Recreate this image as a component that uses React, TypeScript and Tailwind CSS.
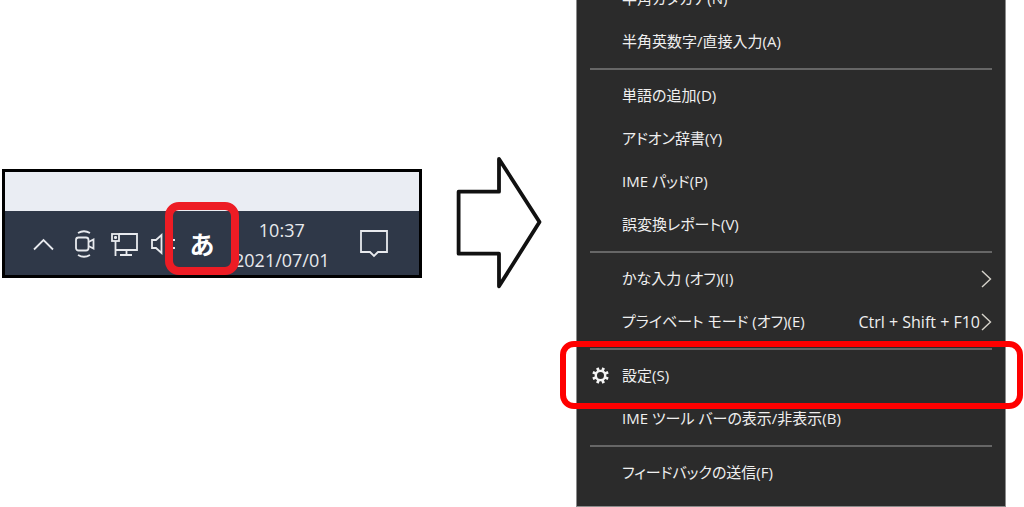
import React from "react";

type Item = {
  label: string;
  shortcut?: string;
  submenu?: boolean;
  settings?: boolean;
};

const groups: Item[][] = [
  [{ label: "半角カタカナ(N)" }, { label: "半角英数字/直接入力(A)" }],
  [
    { label: "単語の追加(D)" },
    { label: "アドオン辞書(Y)" },
    { label: "IME パッド(P)" },
    { label: "誤変換レポート(V)" },
  ],
  [
    { label: "かな入力 (オフ)(I)", submenu: true },
    { label: "プライベート モード (オフ)(E)", shortcut: "Ctrl + Shift + F10", submenu: true },
  ],
  [{ label: "設定(S)", settings: true }, { label: "IME ツール バーの表示/非表示(B)" }],
  [{ label: "フィードバックの送信(F)" }],
];

const GearIcon = () => (
  <svg className="w-[17px] h-[17px]" viewBox="0 0 16 16" fill="none" stroke="#f4f4f4">
    <circle cx="8" cy="8" r="4.4" strokeWidth="2.2" />
    <path
      strokeWidth="2.6"
      d="M12.4 9.8l2.8 1.2M9.8 12.4l1.2 2.8M6.2 12.4L5 15.2M3.6 9.8L.8 11M3.6 6.2L.8 5M6.2 3.6L5 .8M9.8 3.6L11 .8M12.4 6.2L15.2 5"
    />
  </svg>
);

const MenuItem = ({ label, shortcut, submenu, settings }: Item) => (
  <li className="relative">
    <button className="flex items-center w-full h-[43px] pl-[15px] pr-[13px] text-left whitespace-nowrap">
      <span className="w-[30px] shrink-0">{settings && <GearIcon />}</span>
      <span className="grow">{label}</span>
      {shortcut && <span className="text-base">{shortcut}</span>}
      {submenu && (
        <svg className="w-3 h-5 shrink-0" viewBox="0 0 12 20" fill="none" stroke="#d6d3cb" strokeWidth="1.4">
          <path d="M2 2l8.500 8L2 18" />
        </svg>
      )}
    </button>
    {settings && (
      <div className="absolute z-10 -top-[13px] -bottom-[12px] -left-[17px] -right-[18px] border-6 border-[#ff0000] rounded-[14px] pointer-events-none"></div>
    )}
  </li>
);

const ImeMenu = () => (
  <nav className="min-w-0 -mt-6 pb-3 bg-[#2b2b2b] border border-[#8c8c8c] text-[#efefef] text-[15px]">
    {groups.map((items, i) => (
      <React.Fragment key={i}>
        {i > 0 && (
          <div className="h-[11px] px-[13px] flex items-center">
            <hr className="grow border-0 h-[2px] bg-[#666666]" />
          </div>
        )}
        <ul>
          {items.map((item) => (
            <MenuItem key={item.label} {...item} />
          ))}
        </ul>
      </React.Fragment>
    ))}
  </nav>
);

const Taskbar = () => (
  <section className="min-w-0 mt-[169px] border-3 border-black bg-[#eaedf3]">
    <div className="h-[39px]"></div>
    <div className="flex items-center h-16 pt-[2px] pl-7 bg-[#2f3848] text-[#e8eaee]">
      <button aria-label="隠れているインジケーター" className="shrink-0 mr-[21px]">
        <svg className="block w-[21px] h-7" viewBox="0 0 21 28" fill="none" stroke="currentColor" strokeWidth="1.800">
          <path d="M1 19.500L10.500 10 20 19.500" />
        </svg>
      </button>
      <button aria-label="会議" className="shrink-0 mr-4">
        <svg className="block w-5 h-7" viewBox="0 0 20 28" fill="none" stroke="currentColor" strokeWidth="1.800">
          <rect x="1" y="7.500" width="12.500" height="13" rx="2.500" />
          <path d="M13.500 12l5-2.500v9l-5-2.500M3 3Q9 -.5 15 3M3 25Q9 28.500 15 25" />
        </svg>
      </button>
      <button aria-label="ネットワーク" className="shrink-0 mr-[13px]">
        <svg className="block w-[27px] h-7" viewBox="0 0 27 28" fill="none" stroke="currentColor" strokeWidth="1.800">
          <path d="M8 4h18v16H5M15.500 20v4.500M9 25h12M4.500 11v15" />
          <rect x="1" y="4" width="7" height="7" />
          <path d="M3 7.500h3M4.500 6v3" />
        </svg>
      </button>
      <button aria-label="音量" className="shrink-0 -mr-[11px]">
        <svg className="block w-[25px] h-7" viewBox="0 0 25 28" fill="none" stroke="currentColor" strokeWidth="1.800">
          <path d="M1 10h4l5.500-5v18L5 18H1zM22 10h2M22 18h2" />
        </svg>
      </button>
      <button className="relative z-10 shrink-0 w-[74px] h-[73px] -mt-[11px] pt-3 border-8 border-[#ed1c24] rounded-[14px] text-[25px] leading-none font-bold text-white">
        あ
      </button>
      <time dateTime="2021-07-01T10:37" className="shrink-0 pt-[2px] -ml-[5px] text-center text-[18px] leading-[30px]">
        <span className="block">10:37</span>
        <span className="block">2021/07/01</span>
      </time>
      <button aria-label="通知" className="shrink-0 ml-[30px]">
        <svg className="block w-7 h-7" viewBox="0 0 28 28" fill="none" stroke="currentColor" strokeWidth="1.800">
          <path d="M1 1h26v21h-9l-4 4-4-4H1z" />
        </svg>
      </button>
    </div>
  </section>
);

const Arrow = () => (
  <svg className="w-[86px] h-[132px] mt-[157px]" viewBox="0 0 86 132" fill="white" stroke="#111111" strokeWidth="3.800" strokeLinejoin="round">
    <path d="M2.600 34.700H43V2l40.500 63L43 129.300V96.700H2.600z" />
  </svg>
);

export default function App() {
  return (
    <main className="grid grid-cols-[420fr_86px_430fr] items-start gap-[34px] pl-[2px] pr-[18px] overflow-hidden bg-white font-['Open_Sans','Noto_Sans_CJK_JP',sans-serif] [font-feature-settings:'palt']">
      <Taskbar />
      <Arrow />
      <ImeMenu />
    </main>
  );
}
